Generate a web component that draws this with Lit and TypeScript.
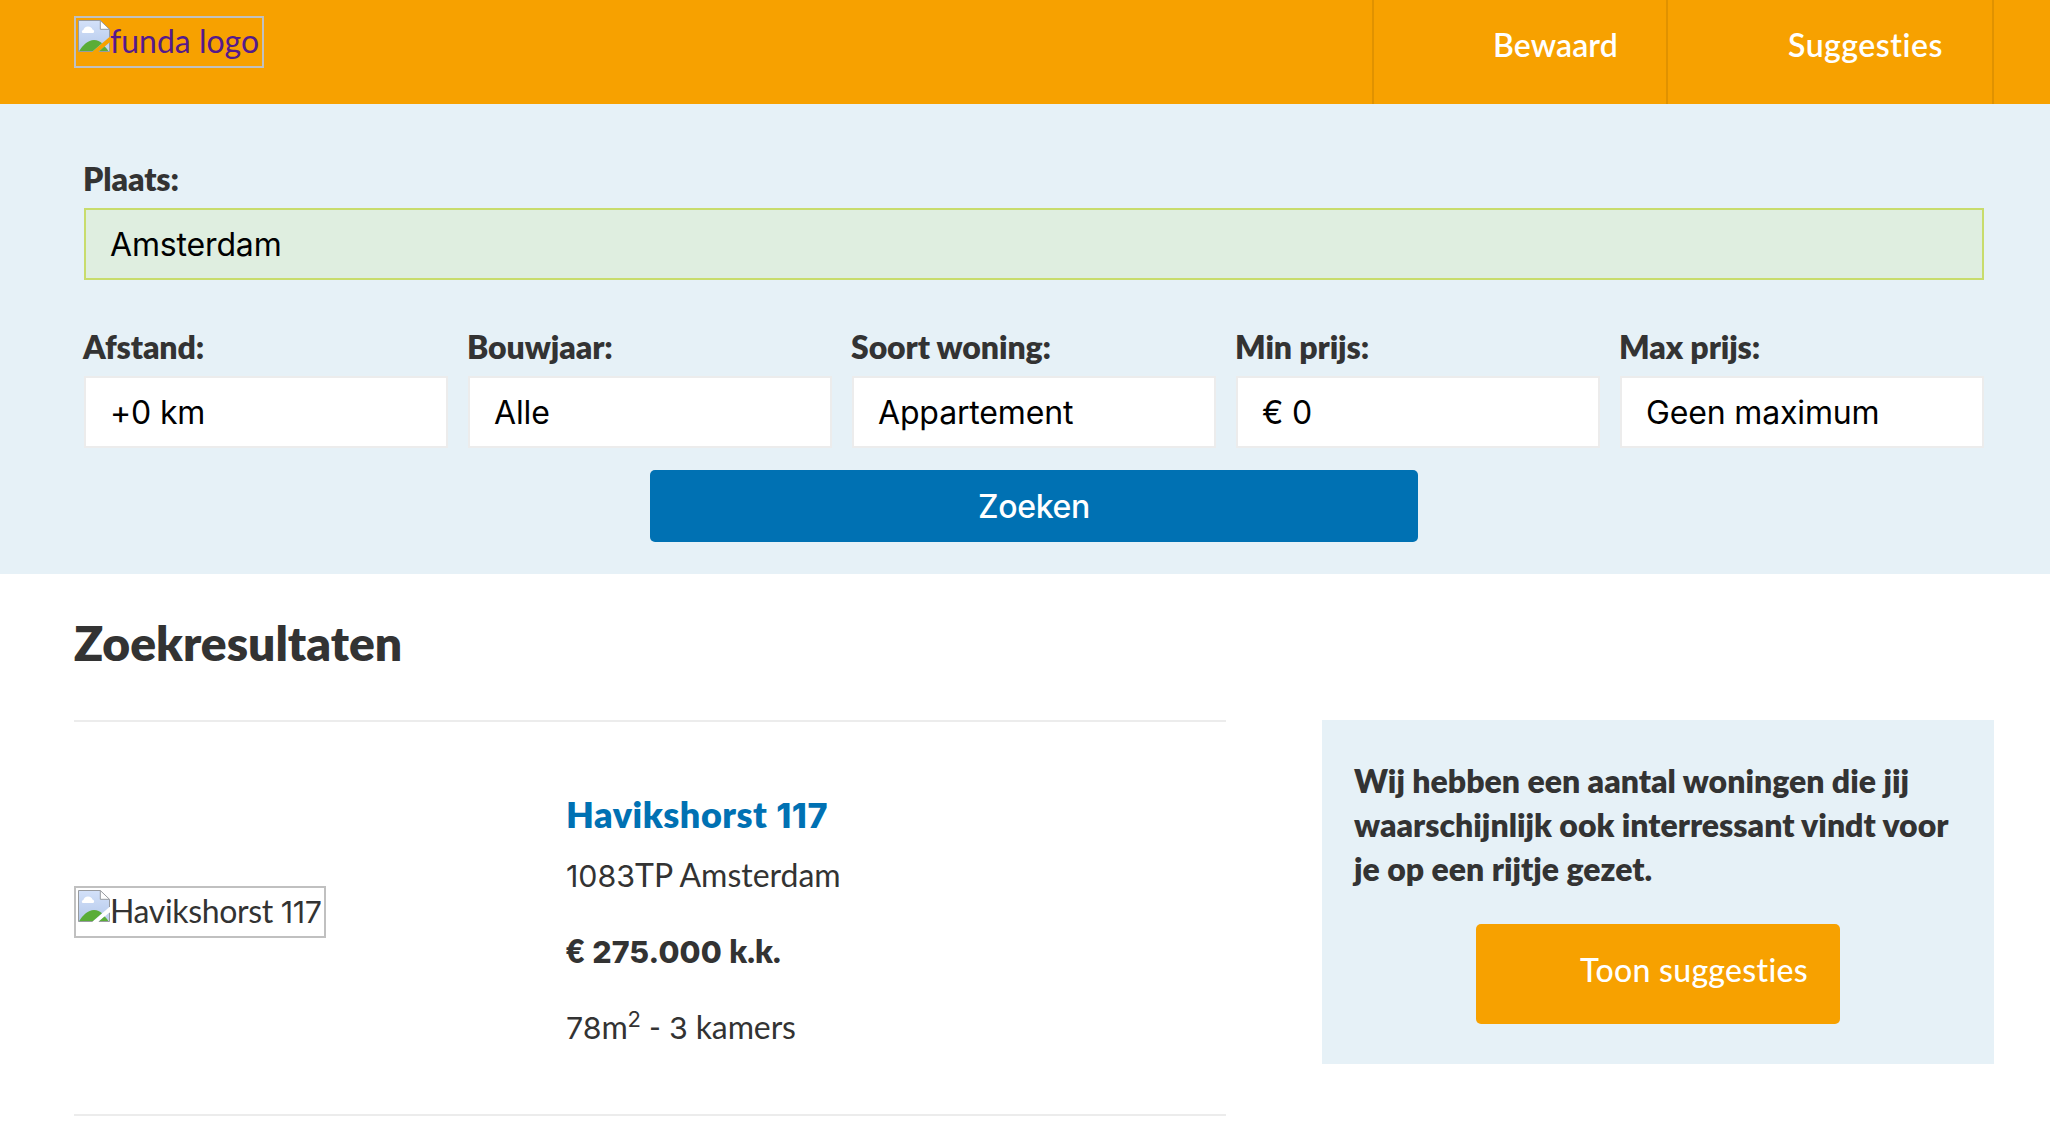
import { LitElement, html, css } from "lit";
import { customElement } from "lit/decorators.js";

const brokenImage = html`
  <svg class="broken" viewBox="0 0 32 32" aria-hidden="true">
    <defs>
      <linearGradient id="sky" x1="0" y1="0" x2="0" y2="1">
        <stop offset="0" stop-color="#d3e1f9" />
        <stop offset="1" stop-color="#b4c8ea" />
      </linearGradient>
    </defs>
    <path d="M.5 .5H22L31.5 9.5V17L14.5 31.5H.5Z" fill="url(#sky)" />
    <path d="M20.8 31.5L31.5 22.6V31.5Z" fill="#c3d3ef" />
    <path d="M1 31.2C5 25 10 20 16 20C19.5 20 22 21.4 24 23.3L14.7 31.2Z" fill="#5aad37" />
    <path d="M21 31.2L26.5 26.6C28.2 28 29.6 29.8 30.4 31.2Z" fill="#5aad37" />
    <path d="M5.2 13C3.6 13 3.2 10.6 5.4 10C5.8 8 7.6 6.4 10 6.4C12.6 6.4 14 7.8 14.4 9.4C16.6 9.8 16.8 13 14.6 13Z" fill="#fff" />
    <path d="M22.3 .8V9.3H31.2Z" fill="#fff" />
    <path d="M14.5 31.5H.5V.5H22.3L31.5 9.3V17M22.3 .5V9.3H31.5M31.5 22.8V31.5H20.8" fill="none" stroke="#989b9f" />
  </svg>
`;

const filters = [
  { label: "Afstand:", value: "+0 km" },
  { label: "Bouwjaar:", value: "Alle" },
  { label: "Soort woning:", value: "Appartement" },
  { label: "Min prijs:", value: "€ 0" },
  { label: "Max prijs:", value: "Geen maximum" },
];

@customElement("app-root")
export class AppRoot extends LitElement {
  static styles = css`
    :host {
      display: block;
      height: 1142px;
      overflow: hidden;
      background: #fff;
      color: #333;
      font: 400 32px/44px Lato, "Liberation Sans", sans-serif;
      font-variant-ligatures: none;
    }
    * { box-sizing: border-box; margin: 0; }
    .header {
      display: flex;
      justify-content: space-between;
      align-items: flex-start;
      height: 104px;
      padding: 0 56px 0 74px;
      background: #f7a100;
    }
    .image {
      display: flex;
      width: 190px;
      height: 52px;
      padding: 2px;
      border: 2px solid #c0c0c0;
      line-height: 42px;
      white-space: nowrap;
    }
    .logo { margin-top: 16px; color: #551a8b; }
    .broken { display: block; flex: none; width: 32px; height: 32px; }
    .nav { display: flex; height: 104px; border-left: 2px solid #e09200; }
    .nav-item {
      width: 294px;
      padding: 21px 0 0 119px;
      border-right: 2px solid #e09200;
      color: #fff;
      font-weight: 600;
      line-height: 48px;
      letter-spacing: 0.1px;
    }
    .nav-item.wide { width: 326px; padding-left: 120px; letter-spacing: 0.5px; }
    .search { height: 470px; padding: 51px 66px 0 84px; background: #e6f1f7; }
    .label {
      display: block;
      margin: 0 0 5px -1px;
      font-weight: 800;
      line-height: 48px;
      letter-spacing: -0.1px;
    }
    .field {
      height: 72px;
      padding: 0 24px;
      border: 2px solid #ececec;
      background: #fff;
      color: #000;
      font: 400 32px/70px Inter, sans-serif;
      letter-spacing: -0.15px;
      white-space: nowrap;
    }
    .field.valid { border-color: #c8dc6c; background: #dfeee0; }
    .filters {
      display: grid;
      grid-template-columns: repeat(5, 1fr);
      gap: 20px;
      margin-top: 43px;
    }
    .submit {
      width: 768px;
      height: 72px;
      margin: 22px auto 0;
      border-radius: 5px;
      background: #0071b3;
      color: #fff;
      font: 500 32px/74px Inter, sans-serif;
      letter-spacing: -0.3px;
      text-align: center;
    }
    .main { padding: 39px 56px 0 74px; }
    .heading {
      font-size: 48px;
      font-weight: 800;
      line-height: 60px;
      letter-spacing: 0;
    }
    .columns {
      display: flex;
      justify-content: space-between;
      align-items: flex-start;
      margin-top: 47px;
    }
    .results { width: 1152px; border-top: 2px solid #ececec; }
    .result { display: flex; height: 394px; border-bottom: 2px solid #ececec; }
    .media { width: 492px; padding-top: 164px; }
    .photo { width: 252px; letter-spacing: -0.35px; }
    .details { padding-top: 67px; }
    .title {
      margin-bottom: 14px;
      color: #0071b3;
      font-size: 36px;
      font-weight: 800;
      line-height: 50px;
      letter-spacing: 0.5px;
    }
    .price { margin: 32px 0; font-weight: 800; letter-spacing: 0.1px; }
    .num { font-family: Inter, sans-serif; font-size: 0.95em; line-height: 0; }
    .sup { position: relative; top: -12px; font-size: 22px; line-height: 0; }
    .rooms { letter-spacing: -0.1px; }
    .aside {
      width: 672px;
      height: 344px;
      padding: 39px 32px 0;
      background: #e6f1f7;
    }
    .pitch { font-weight: 800; letter-spacing: 0; white-space: nowrap; }
    .suggest {
      width: 364px;
      height: 100px;
      margin: 33px auto 0;
      padding: 22px 0 0 104px;
      border-radius: 5px;
      background: #f7a100;
      color: #fff;
      font-weight: 500;
      line-height: 48px;
      letter-spacing: 0.3px;
    }
  `;

  render() {
    return html`
      <header class="header">
        <div class="image logo">${brokenImage}<span>funda logo</span></div>
        <nav class="nav">
          <div class="nav-item">Bewaard</div>
          <div class="nav-item wide">Suggesties</div>
        </nav>
      </header>
      <section class="search">
        <span class="label">Plaats:</span>
        <div class="field valid">Amsterdam</div>
        <div class="filters">
          ${filters.map(
            (f) => html`<div>
              <span class="label">${f.label}</span>
              <div class="field">${f.value}</div>
            </div>`
          )}
        </div>
        <div class="submit" role="button">Zoeken</div>
      </section>
      <main class="main">
        <h1 class="heading">Zoekresultaten</h1>
        <div class="columns">
          <div class="results">
            <article class="result">
              <div class="media">
                <div class="image photo">${brokenImage}<span>Havikshorst <span class="num">117</span></span></div>
              </div>
              <div class="details">
                <h2 class="title">Havikshorst <span class="num">117</span></h2>
                <p><span class="num">1083</span>TP Amsterdam</p>
                <p class="price">€ <span class="num">275.000</span> k.k.</p>
                <p class="rooms"><span class="num">78</span>m<span class="num sup">2</span> - <span class="num">3</span> kamers</p>
              </div>
            </article>
          </div>
          <aside class="aside">
            <p class="pitch">
              Wij hebben een aantal woningen die jij<br />waarschijnlijk ook interressant vindt voor<br />je op een rijtje gezet.
            </p>
            <div class="suggest" role="button">Toon suggesties</div>
          </aside>
        </div>
      </main>
    `;
  }
}
